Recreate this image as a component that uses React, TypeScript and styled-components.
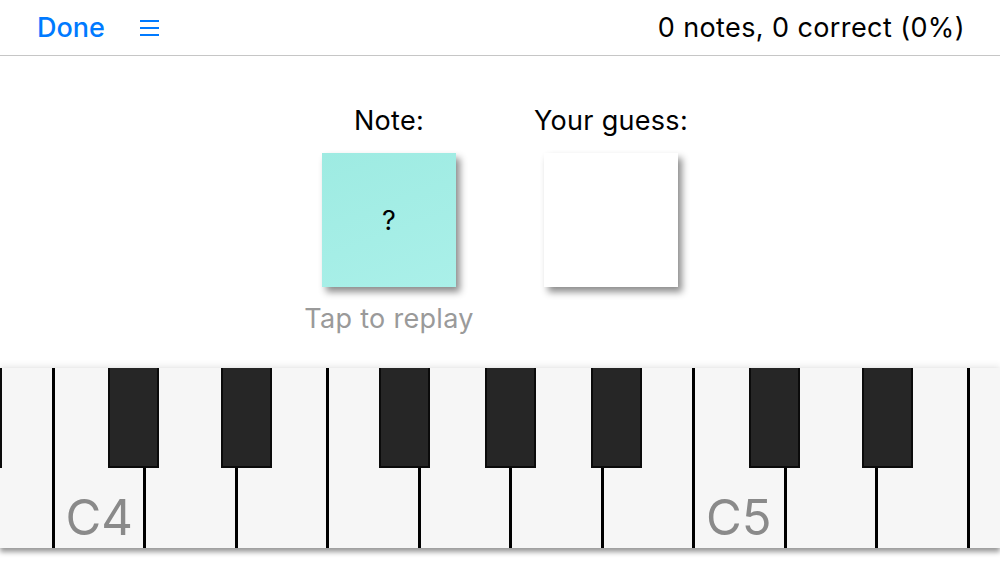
import styled, { createGlobalStyle } from 'styled-components';

const Global = createGlobalStyle`
  html, body {
    margin: 0;
    padding: 0;
    background: #fff;
    font-family: Inter, "Noto Sans", sans-serif;
    color: #000;
  }
`;

const Page = styled.div`
  width: 1000px;
  height: 563px;
  overflow: hidden;
  display: flex;
  flex-direction: column;
  background: #fff;
`;

const TopBar = styled.header`
  height: 55px;
  border-bottom: 1px solid #c6c6c6;
  display: flex;
  align-items: center;
  justify-content: space-between;
  padding: 0 35px 0 37px;
  flex-shrink: 0;
  .left {
    display: flex;
    align-items: center;
    gap: 35px;
  }
`;

const DoneButton = styled.button`
  border: 0;
  background: none;
  padding: 0;
  font-family: inherit;
  font-size: 27px;
  font-weight: 500;
  color: #007aff;
  line-height: 30px;
`;

const MenuButton = styled.button`
  border: 0;
  background: none;
  padding: 0;
  display: flex;
  svg {
    display: block;
  }
`;

const Stats = styled.div`
  font-size: 27px;
  line-height: 30px;
  letter-spacing: 0.4px;
`;

const Main = styled.main`
  height: 312px;
  flex-shrink: 0;
  display: flex;
  justify-content: center;
  padding-top: 50px;
  box-sizing: border-box;
`;

const Column = styled.div`
  width: 222px;
  display: flex;
  flex-direction: column;
  align-items: center;
`;

const Label = styled.div`
  font-size: 27px;
  line-height: 30px;
  letter-spacing: 0.3px;
  margin-bottom: 17px;
`;

const Card = styled.div<{ $tint?: boolean }>`
  width: 134px;
  height: 134px;
  background: ${p => (p.$tint ? 'linear-gradient(160deg, #9eebe2, #aaf0e9)' : '#fff')};
  box-shadow: 4px 5px 7px rgba(0, 0, 0, 0.45);
  display: flex;
  align-items: center;
  justify-content: center;
  font-size: 27px;
`;

const Hint = styled.div`
  margin-top: 17px;
  font-size: 27px;
  line-height: 30px;
  letter-spacing: 0.3px;
  color: #9a9a9a;
  white-space: nowrap;
`;

const Keyboard = styled.div`
  position: relative;
  height: 180px;
  flex-shrink: 0;
  background: #f6f6f6;
  box-shadow: 0 4px 5px rgba(0, 0, 0, 0.4), 0 -3px 6px rgba(0, 0, 0, 0.07);
  overflow: hidden;
`;

const WhiteRow = styled.div`
  display: flex;
  height: 100%;
  margin-left: -40px;
`;

const WhiteKey = styled.div`
  width: 91.5px;
  flex-shrink: 0;
  height: 100%;
  box-sizing: border-box;
  border-left: 3px solid #000;
  display: flex;
  align-items: flex-end;
  padding: 0 0 6px 11px;
  font-size: 49px;
  line-height: 1;
  color: #8a8a8a;
`;

const BlackKey = styled.div`
  position: absolute;
  top: 0;
  width: 51px;
  height: 100px;
  box-sizing: border-box;
  background: #262626;
  border: 2px solid #0b0b0b;
  border-top: 0;
`;

const whites = ['B3', 'C4', 'D4', 'E4', 'F4', 'G4', 'A4', 'B4', 'C5', 'D5', 'E5', 'F5'];
const blackOffsets = [55, 168, 326, 432, 538];
const octaveStarts = [53 - 640.5, 53, 693.5];

const blacks = octaveStarts
  .flatMap(start => blackOffsets.map(o => start + o))
  .filter(x => x + 51 > 0 && x < 1000);

const App = () => {
  return (
    <Page>
      <Global />
      <TopBar>
        <div className="left">
          <DoneButton>Done</DoneButton>
          <MenuButton aria-label="menu">
            <svg width="19" height="16" viewBox="0 0 19 16">
              <g stroke="#007aff" strokeWidth="2">
                <line x1="0" y1="1" x2="19" y2="1" />
                <line x1="0" y1="8" x2="19" y2="8" />
                <line x1="0" y1="15" x2="19" y2="15" />
              </g>
            </svg>
          </MenuButton>
        </div>
        <Stats>0 notes, 0 correct (0%)</Stats>
      </TopBar>
      <Main>
        <Column>
          <Label>Note:</Label>
          <Card $tint>?</Card>
          <Hint>Tap to replay</Hint>
        </Column>
        <Column>
          <Label>Your guess:</Label>
          <Card />
        </Column>
      </Main>
      <Keyboard>
        <WhiteRow>
          {whites.map(n => (
            <WhiteKey key={n}>{n.startsWith('C') ? n : ''}</WhiteKey>
          ))}
        </WhiteRow>
        {blacks.map(x => (
          <BlackKey key={x} style={{ left: x }} />
        ))}
      </Keyboard>
    </Page>
  );
};

export default App;
